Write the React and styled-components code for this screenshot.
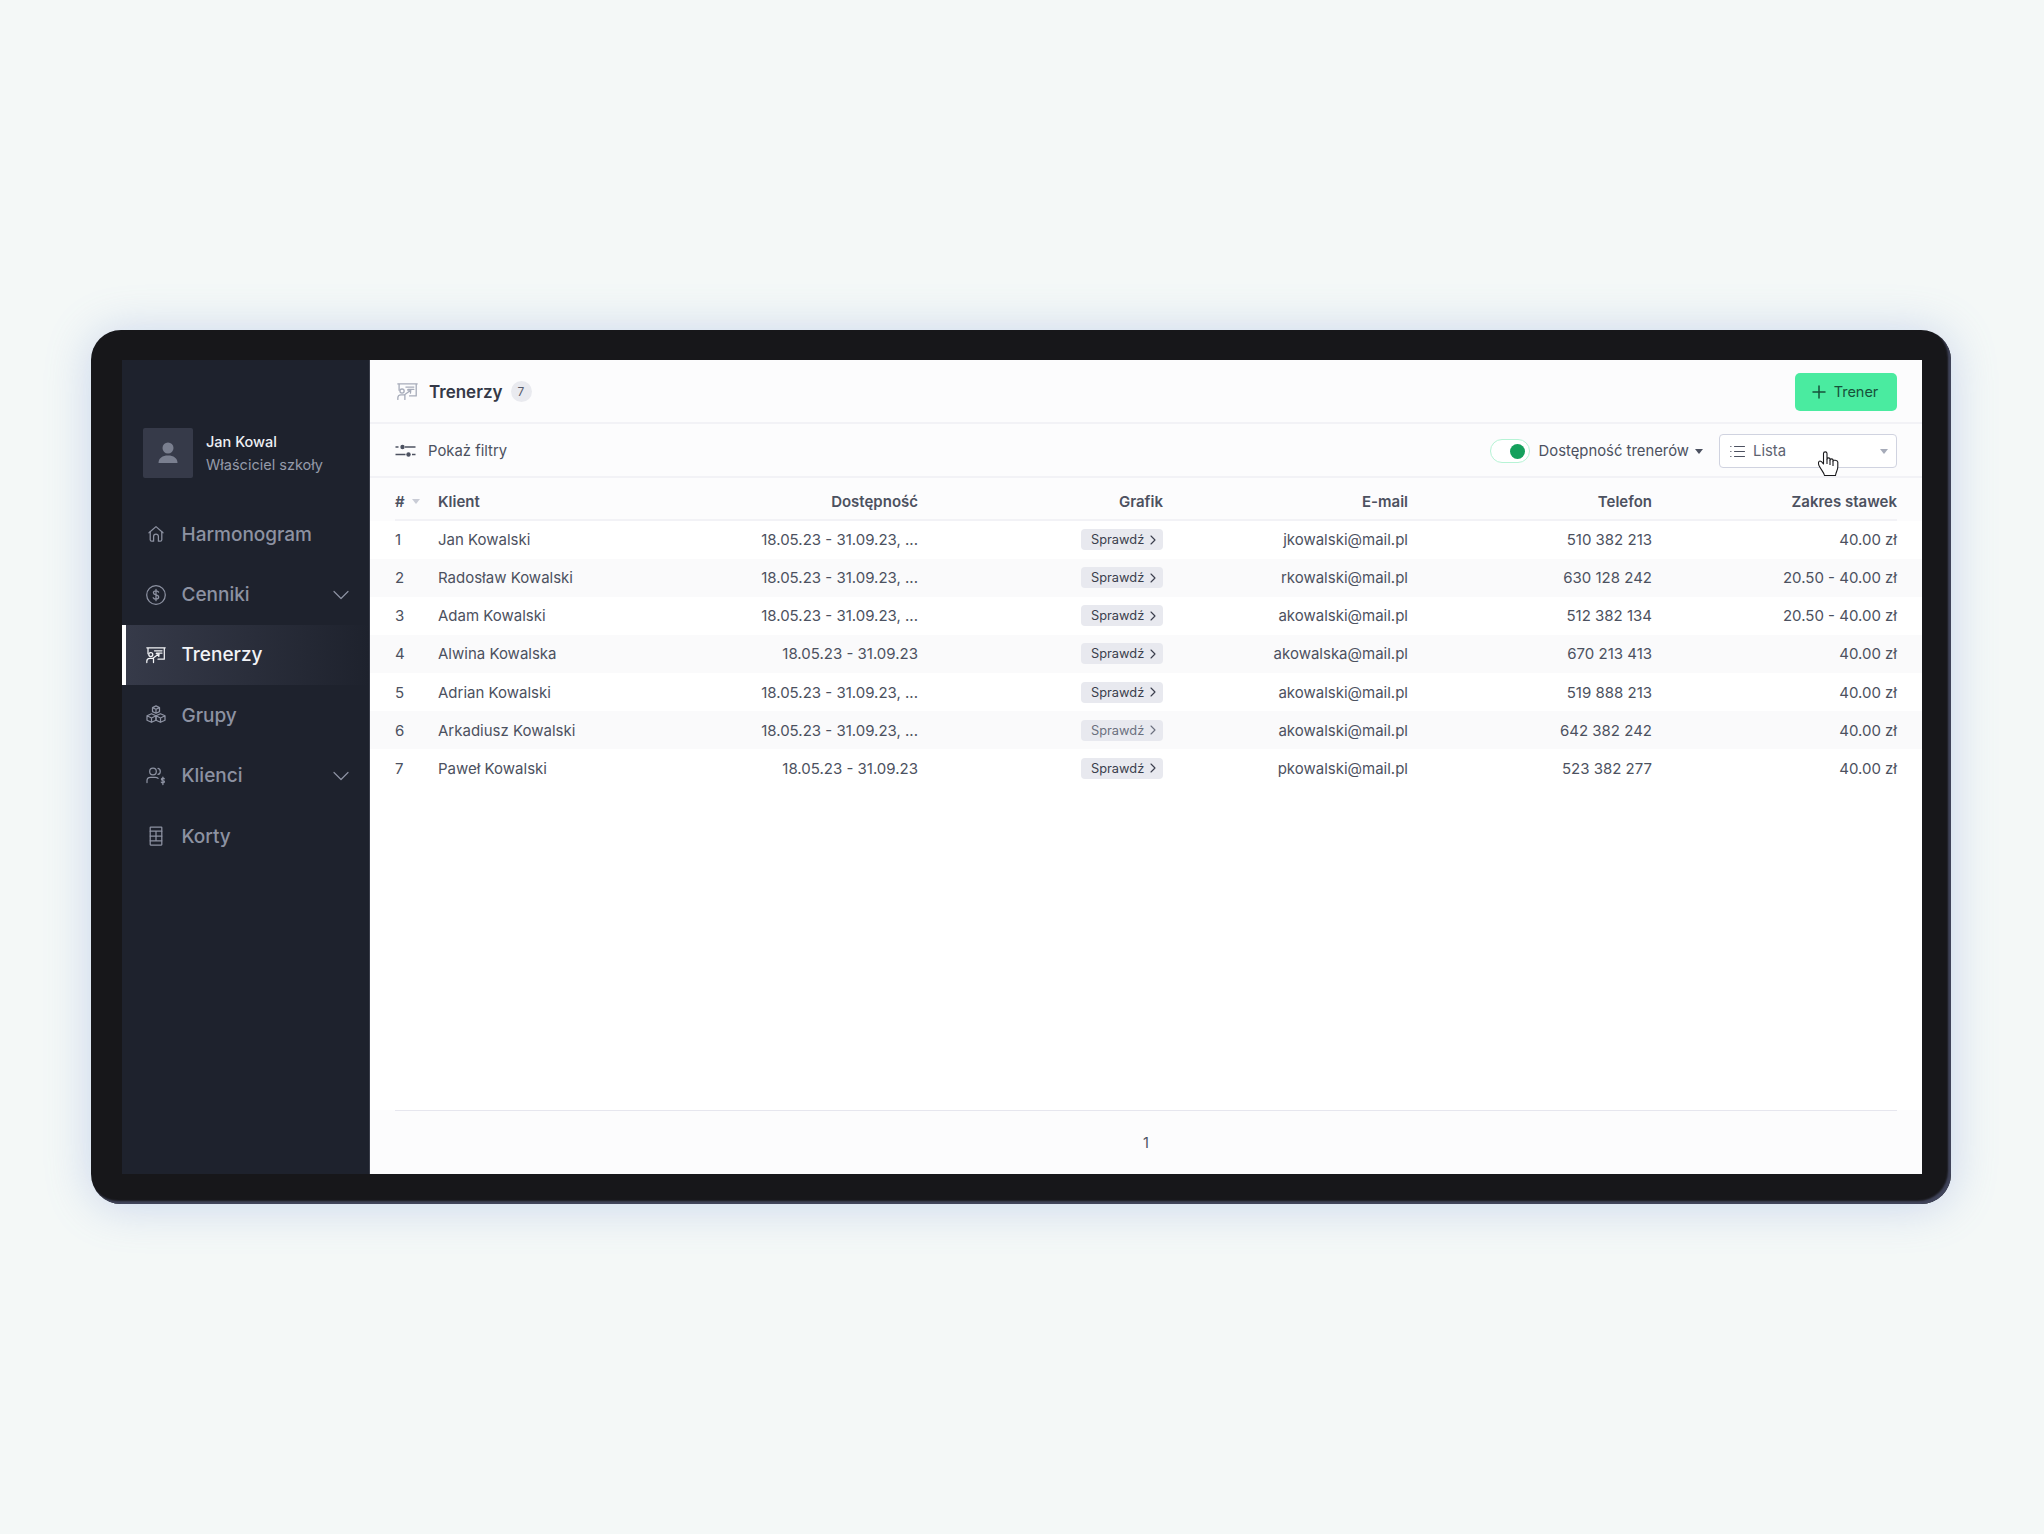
import React from "react";
import styled, { createGlobalStyle } from "styled-components";

const GlobalStyle = createGlobalStyle`
	html, body {
		margin: 0;
		padding: 0;
		background: #f4f8f7;
	}
	* {
		box-sizing: border-box;
	}
	body {
		font-family: "Inter", "Liberation Sans", sans-serif;
		-webkit-font-smoothing: antialiased;
	}
`;

const trainers = [
	{ id: 1, name: "Jan Kowalski", dates: "18.05.23 - 31.09.23, ...", email: "jkowalski@mail.pl", phone: "510 382 213", rate: "40.00 zł" },
	{ id: 2, name: "Radosław Kowalski", dates: "18.05.23 - 31.09.23, ...", email: "rkowalski@mail.pl", phone: "630 128 242", rate: "20.50 - 40.00 zł" },
	{ id: 3, name: "Adam Kowalski", dates: "18.05.23 - 31.09.23, ...", email: "akowalski@mail.pl", phone: "512 382 134", rate: "20.50 - 40.00 zł" },
	{ id: 4, name: "Alwina Kowalska", dates: "18.05.23 - 31.09.23", email: "akowalska@mail.pl", phone: "670 213 413", rate: "40.00 zł" },
	{ id: 5, name: "Adrian Kowalski", dates: "18.05.23 - 31.09.23, ...", email: "akowalski@mail.pl", phone: "519 888 213", rate: "40.00 zł" },
	{ id: 6, name: "Arkadiusz Kowalski", dates: "18.05.23 - 31.09.23, ...", email: "akowalski@mail.pl", phone: "642 382 242", rate: "40.00 zł", muted: true },
	{ id: 7, name: "Paweł Kowalski", dates: "18.05.23 - 31.09.23", email: "pkowalski@mail.pl", phone: "523 382 277", rate: "40.00 zł" },
];

const Icon = ({ size = 20, children, ...rest }) => (
	<svg width={size} height={size} viewBox="0 0 20 20" fill="none" stroke="currentColor" strokeWidth="1.25" strokeLinecap="round" strokeLinejoin="round" {...rest}>
		{children}
	</svg>
);

const HomeIcon = () => (
	<Icon>
		<path d="M3 8.800 10 2.600l7 6.200" />
		<path d="M4.200 7.800v7.900c0 .9.6 1.500 1.500 1.500h1.900v-4.700a2.400 2.400 0 0 1 4.800 0v4.700h1.900c.9 0 1.500-.6 1.500-1.500V7.800" />
	</Icon>
);

const DollarIcon = () => (
	<Icon>
		<circle cx="10" cy="10" r="9.300" />
		<path d="M12.600 7.100c-.5-.9-1.400-1.300-2.600-1.300-1.500 0-2.600.8-2.600 2s1 1.700 2.600 2.100 2.700 1 2.700 2.200-1.200 2.100-2.700 2.100c-1.300 0-2.300-.5-2.800-1.500M10 4.300v11.400" />
	</Icon>
);

const TrainerIcon = ({ size = 20 }) => (
	<Icon size={size}>
		<path d="M.8 2.800h18.400M2 2.800v6M18.300 2.800v11.400H12" />
		<path d="M8.500 5.800h7.500M10.500 8h5.500" />
		<circle cx="4.800" cy="9.600" r="2" />
		<path d="M.8 17.500v-1.200c0-1.800 1.200-3 3-3h3.100l6.100-4.500M10.200 8.600l2.900.2-.3 2.700M7.500 17.500v-4" />
	</Icon>
);

const GroupIcon = () => (
	<Icon>
		<path d="m10 .9 3.500 1.700v4L10 8.300 6.500 6.600v-4zM6.500 2.600 10 4.300l3.500-1.700M10 4.300v4" />
		<path d="m5.500 8.700 4.500 2.100v4.400l-4.500 2.100L1 15.200v-4.400zM1 10.800l4.500 2.200 4.500-2.200M5.500 13v4.300" />
		<path d="m14.500 8.700 4.500 2.100v4.400l-4.500 2.100-4.500-2.100v-4.400zM10 10.800l4.500 2.200 4.500-2.200M14.500 13v4.300" />
	</Icon>
);

const ClientsIcon = () => (
	<Icon>
		<circle cx="7" cy="5.500" r="3.300" />
		<path d="M12 2.400c1.400.3 2.300 1.500 2.300 3s-.9 2.700-2.300 3" />
		<path d="M1 16.500v-1.800c0-2 1.500-3.300 3.400-3.300h5c1 0 2 .3 2.700 1" />
		<path d="M18.300 12.800c-.3-.5-.8-.7-1.400-.7-.9 0-1.500.5-1.500 1.100s.5 1 1.500 1.200 1.500.6 1.500 1.300-.7 1.200-1.500 1.200c-.7 0-1.300-.3-1.600-.8M16.900 11v7.500" />
	</Icon>
);

const CourtIcon = () => (
	<Icon>
		<rect x="4.200" y="1" width="11.600" height="18" rx=".5" />
		<path d="M4.200 5.200h11.600M4.200 10h11.600M4.200 14.800h11.600M10 5.200v9.600" />
	</Icon>
);

const ChevronIcon = () => (
	<svg width="16" height="10" viewBox="0 0 16 10" fill="none" stroke="currentColor" strokeWidth="1.200" strokeLinecap="round" strokeLinejoin="round">
		<path d="m1 1.500 7 7 7-7" />
	</svg>
);

const PersonIcon = () => (
	<svg width="20" height="22" viewBox="0 0 20 22" fill="#7a7f8f">
		<circle cx="10" cy="6" r="5.500" />
		<path d="M.5 21c0-5 4-7.500 9.500-7.500s9.500 2.500 9.500 7.500z" />
	</svg>
);

const FilterIcon = () => (
	<svg width="21" height="14" viewBox="0 0 21 14" fill="#4c5160" stroke="#4c5160" strokeWidth="1.400">
		<path d="M.5 3h3M10 3h10.500M.5 10.500h10M17 10.500h3.500" fill="none" />
		<circle cx="7.500" cy="3" r="2.200" stroke="none" />
		<circle cx="13.500" cy="10.500" r="2.200" stroke="none" />
	</svg>
);

const ListIcon = () => (
	<svg width="15" height="13" viewBox="0 0 15 13" fill="none" stroke="#4c5160" strokeWidth="1.100" strokeLinecap="round">
		<path d="M4.500 1.500h10M4.500 6.500h10M4.500 11.500h10M.7 1.500h.3M.7 6.500h.3M.7 11.500h.3" />
	</svg>
);

const PlusIcon = () => (
	<svg width="14" height="14" viewBox="0 0 14 14" fill="none" stroke="#17513a" strokeWidth="1.500" strokeLinecap="round">
		<path d="M7 1v12M1 7h12" />
	</svg>
);

const SmallChevron = () => (
	<svg width="6" height="10" viewBox="0 0 6 10" fill="none" stroke="currentColor" strokeWidth="1.100" strokeLinecap="round" strokeLinejoin="round">
		<path d="m1 1 4 4-4 4" />
	</svg>
);

const HandCursor = () => (
	<svg width="21" height="25" viewBox="0 0 21 25" fill="#fff" stroke="#17171a" strokeWidth="1.100" strokeLinejoin="round">
		<path d="M5.500 12.500V2.500C5.500.3 9 .3 9 2.500V8c0-1.500 3-1.500 3 0v1c0-1.500 3-1.500 3 0v1c0-1.200 4.500-1.200 4.800 1v5c0 3-1.800 4.500-2.300 8.500h-11c-.5-3-3-5-5.500-10C0 12 .5 10 2 10c1.300 0 2.500 1.500 3.500 3z" />
		<path d="M9 8v5M12 9v5M15 10v5" fill="none" />
	</svg>
);

const Page = styled.div`
	min-height: 1534px;
	display: flex;
	align-items: center;
	justify-content: center;
	background: #f4f8f7;
`;

const Frame = styled.div`
	width: 1860px;
	height: 874px;
	margin-right: 2px;
	padding: 30px 29px 30px 31px;
	display: flex;
	background: #17171a;
	border-radius: 30px;
	box-shadow:
		inset -3px -3px 2px #40445a,
		0 2px 46px rgba(110, 140, 210, 0.32);
`;

const Sidebar = styled.aside`
	width: 248px;
	flex-shrink: 0;
	padding-top: 68px;
	background: #1e222d;
	border-right: 1px solid #3a3e4a;
`;

const UserBox = styled.div`
	display: flex;
	align-items: center;
	gap: 13px;
	padding: 0 21px;
	margin-bottom: 26px;
`;

const Avatar = styled.div`
	width: 50px;
	height: 50px;
	display: flex;
	align-items: center;
	justify-content: center;
	background: #363a49;
	border-radius: 2px;
`;

const UserName = styled.div`
	font-size: 14.500px;
	line-height: 23px;
	font-weight: 500;
	color: #eef0f4;
`;

const UserRole = styled.div`
	font-size: 14.500px;
	line-height: 23px;
	color: #959aa9;
`;

const NavItem = styled.div`
	position: relative;
	height: 60.4px;
	display: flex;
	align-items: center;
	gap: 15.5px;
	padding: 0 20px 0 ${(p) => (p.$active ? "20px" : "24px")};
	font-size: 19px;
	font-weight: 500;
	color: ${(p) => (p.$active ? "#f2f3f6" : "#8d92a2")};
	border-left: ${(p) => (p.$active ? "4px solid #fff" : "none")};
	background: ${(p) => (p.$active ? "linear-gradient(90deg, #363a49 0%, #1e222d 100%)" : "transparent")};
	svg {
		flex-shrink: 0;
	}
`;

const NavLabel = styled.span`
	flex: 1;
`;

const Main = styled.main`
	flex: 1;
	min-width: 0;
	display: flex;
	flex-direction: column;
	background: #fcfcfd;
`;

const Header = styled.header`
	height: 64px;
	flex-shrink: 0;
	display: flex;
	align-items: center;
	padding: 1px 25px 0 27px;
	border-bottom: 2px solid #f2f2f6;
`;

const Title = styled.h1`
	margin: 0 8px 0 11px;
	font-size: 17px;
	font-weight: 600;
	color: #353947;
`;

const HeaderIcon = styled.span`
	display: flex;
	color: #a6abb9;
`;

const CountBadge = styled.span`
	width: 21px;
	height: 21px;
	display: flex;
	align-items: center;
	justify-content: center;
	border-radius: 50%;
	background: #e9eaef;
	font-size: 12px;
	color: #575c6b;
`;

const AddButton = styled.button`
	margin-left: auto;
	width: 102px;
	height: 38px;
	display: flex;
	align-items: center;
	justify-content: center;
	gap: 8px;
	padding: 0 2px 0 0;
	border: none;
	border-radius: 5px;
	background: #4aeba0;
	font-family: inherit;
	font-size: 14.500px;
	font-weight: 400;
	color: #17513a;
`;

const FilterBar = styled.div`
	height: 54px;
	flex-shrink: 0;
	display: flex;
	align-items: center;
	padding: 2px 25px 0;
	border-bottom: 2px solid #f2f2f6;
	font-size: 14.850px;
	color: #4c5160;
`;

const FilterLabel = styled.span`
	margin-left: 12px;
`;

const Toggle = styled.div`
	margin-left: auto;
	width: 40px;
	height: 24px;
	display: flex;
	align-items: center;
	justify-content: flex-end;
	padding-right: 4px;
	border: 1px solid #b6f3d5;
	border-radius: 12px;
	background: #fff;
`;

const ToggleKnob = styled.span`
	width: 15px;
	height: 15px;
	border-radius: 50%;
	background: #14a05c;
`;

const ToggleLabel = styled.span`
	margin-left: 9px;
`;

const Caret = styled.span`
	margin-left: ${(p) => p.$gap || "6px"};
	width: 0;
	height: 0;
	border-left: 4px solid transparent;
	border-right: 4px solid transparent;
	border-top: 5px solid ${(p) => p.$color || "#4c5160"};
`;

const Select = styled.div`
	position: relative;
	margin-left: 16px;
	width: 178px;
	height: 34px;
	display: flex;
	align-items: center;
	padding: 0 8px 0 10px;
	background: #fff;
	border: 1px solid #d0d3e0;
	border-radius: 4px;
`;

const SelectValue = styled.span`
	flex: 1;
	margin-left: 8px;
	color: #5d6270;
`;

const Cursor = styled.span`
	position: absolute;
	left: 98px;
	top: 16px;
	display: flex;
`;

const Row = styled.div`
	display: grid;
	grid-template-columns: 43px 240px 240px 245px 245px 244px 245px;
	align-items: center;
`;

const HeadRow = styled(Row)`
	height: 42.6px;
	flex-shrink: 0;
	margin: 0 25px;
	padding-top: 7px;
	border-bottom: 2px solid #f2f2f6;
	font-size: 15px;
	font-weight: 600;
	color: #4c5160;
`;

const Body = styled.div`
	flex: 1;
	min-height: 0;
	background: #fff;
`;

const BodyRow = styled(Row)`
	height: 38.1px;
	padding: 0 25px;
	font-size: 15px;
	color: #4c5160;
	background: ${(p) => (p.$even ? "#fafafb" : "#fff")};
`;

const Cell = styled.div`
	white-space: nowrap;
	text-align: ${(p) => (p.$right ? "right" : "left")};
`;

const SortCell = styled(Cell)`
	display: flex;
	align-items: center;
	gap: 7px;
`;

const CheckButton = styled.span`
	display: inline-flex;
	align-items: center;
	gap: 6px;
	width: 82px;
	height: 21px;
	padding-left: 10px;
	border-radius: 4px;
	background: #e8e9ef;
	font-size: 12.800px;
	color: ${(p) => (p.$muted ? "#6b707e" : "#3a3e4c")};
`;

const Footer = styled.footer`
	height: 64px;
	flex-shrink: 0;
	display: flex;
	align-items: center;
	justify-content: center;
	position: relative;
	font-size: 14.500px;
	color: #4c5160;
	&::before {
		content: "";
		position: absolute;
		left: 25px;
		right: 25px;
		top: 0;
		height: 1px;
		background: #e6e6ee;
	}
`;

const nav = [
	{ label: "Harmonogram", icon: <HomeIcon /> },
	{ label: "Cenniki", icon: <DollarIcon />, expand: true },
	{ label: "Trenerzy", icon: <TrainerIcon />, active: true },
	{ label: "Grupy", icon: <GroupIcon /> },
	{ label: "Klienci", icon: <ClientsIcon />, expand: true },
	{ label: "Korty", icon: <CourtIcon /> },
];

export default function App() {
	return (
		<Page>
			<GlobalStyle />
			<Frame>
				<Sidebar>
					<UserBox>
						<Avatar>
							<PersonIcon />
						</Avatar>
						<div>
							<UserName>Jan Kowal</UserName>
							<UserRole>Właściciel szkoły</UserRole>
						</div>
					</UserBox>
					{nav.map((item) => (
						<NavItem key={item.label} $active={item.active}>
							{item.icon}
							<NavLabel>{item.label}</NavLabel>
							{item.expand && <ChevronIcon />}
						</NavItem>
					))}
				</Sidebar>
				<Main>
					<Header>
						<HeaderIcon>
							<TrainerIcon size={21} />
						</HeaderIcon>
						<Title>Trenerzy</Title>
						<CountBadge>7</CountBadge>
						<AddButton>
							<PlusIcon />
							Trener
						</AddButton>
					</Header>
					<FilterBar>
						<FilterIcon />
						<FilterLabel>Pokaż filtry</FilterLabel>
						<Toggle>
							<ToggleKnob />
						</Toggle>
						<ToggleLabel>Dostępność trenerów</ToggleLabel>
						<Caret />
						<Select>
							<ListIcon />
							<SelectValue>Lista</SelectValue>
							<Caret $color="#a6abb9" />
							<Cursor>
								<HandCursor />
							</Cursor>
						</Select>
					</FilterBar>
					<HeadRow>
						<SortCell>
							#
							<Caret $color="#c9ccd6" $gap="0" />
						</SortCell>
						<Cell>Klient</Cell>
						<Cell $right>Dostępność</Cell>
						<Cell $right>Grafik</Cell>
						<Cell $right>E-mail</Cell>
						<Cell $right>Telefon</Cell>
						<Cell $right>Zakres stawek</Cell>
					</HeadRow>
					<Body>
						{trainers.map((t, i) => (
							<BodyRow key={t.id} $even={i % 2 === 1}>
								<Cell>{t.id}</Cell>
								<Cell>{t.name}</Cell>
								<Cell $right>{t.dates}</Cell>
								<Cell $right>
									<CheckButton $muted={t.muted}>
										Sprawdź
										<SmallChevron />
									</CheckButton>
								</Cell>
								<Cell $right>{t.email}</Cell>
								<Cell $right>{t.phone}</Cell>
								<Cell $right>{t.rate}</Cell>
							</BodyRow>
						))}
					</Body>
					<Footer>1</Footer>
				</Main>
			</Frame>
		</Page>
	);
}
